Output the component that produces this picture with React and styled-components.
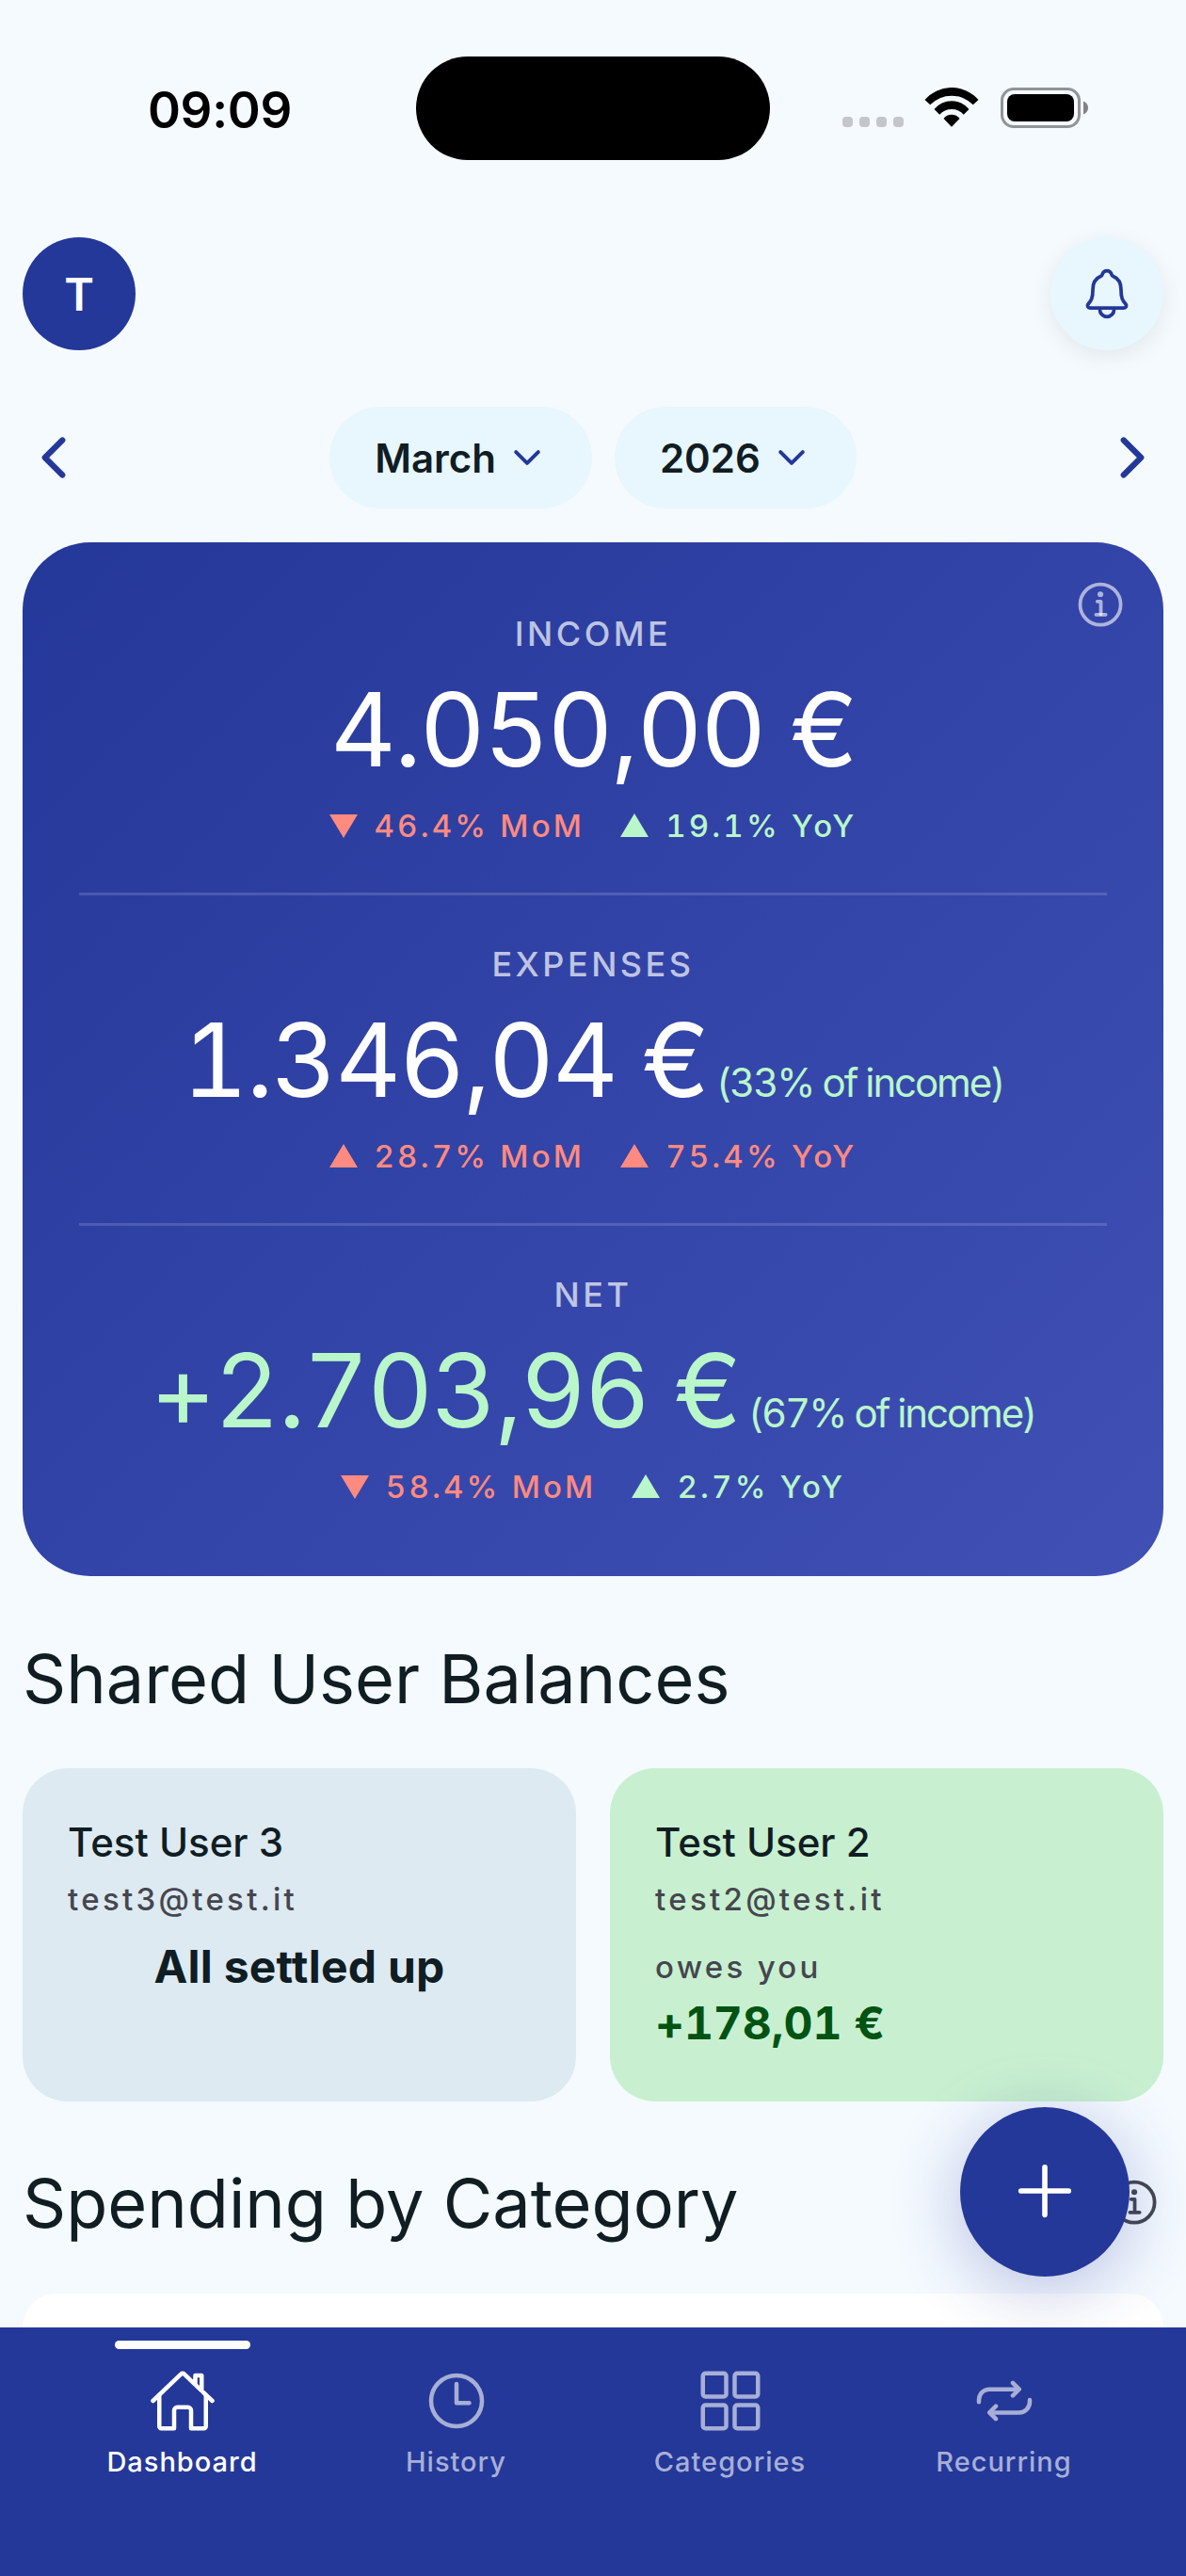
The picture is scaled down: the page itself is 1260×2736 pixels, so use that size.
import React from "react";
import styled, { createGlobalStyle, css } from "styled-components";
import {
  IoAdd,
  IoChevronBack,
  IoChevronDown,
  IoChevronForward,
  IoGridOutline,
  IoHomeOutline,
  IoInformationCircleOutline,
  IoNotificationsOutline,
  IoRepeatOutline,
  IoTimeOutline,
} from "react-icons/io5";

const stats = [
  {
    label: "INCOME",
    amount: "4.050,00 €",
    mom: { up: false, good: false, text: "46.4% MoM" },
    yoy: { up: true, good: true, text: "19.1% YoY" },
  },
  {
    label: "EXPENSES",
    amount: "1.346,04 €",
    share: "(33% of income)",
    mom: { up: true, good: false, text: "28.7% MoM" },
    yoy: { up: true, good: false, text: "75.4% YoY" },
  },
  {
    label: "NET",
    amount: "+2.703,96 €",
    positive: true,
    share: "(67% of income)",
    mom: { up: false, good: false, text: "58.4% MoM" },
    yoy: { up: true, good: true, text: "2.7% YoY" },
  },
];

const tabs = [
  { label: "Dashboard", Icon: IoHomeOutline, active: true },
  { label: "History", Icon: IoTimeOutline },
  { label: "Categories", Icon: IoGridOutline },
  { label: "Recurring", Icon: IoRepeatOutline },
];

const WifiIcon = () => (
  <svg width="58" height="44" viewBox="0 0 58 44">
    <path d="M0.5 13A37.7 37.7 0 0 1 57.5 13L51.8 18.3A31.9 31.9 0 0 0 6.2 18.3Z" />
    <path d="M10.5 23A24 24 0 0 1 47.5 23L41.8 28.7A17.2 17.2 0 0 0 16.2 28.7Z" />
    <path d="M20.5 33A10.6 10.6 0 0 1 37.5 33L29 41.7Z" />
  </svg>
);

const BatteryIcon = () => (
  <svg width="94" height="44" viewBox="0 0 94 44">
    <rect
      x="1.5"
      y="1.5"
      width="82"
      height="40"
      rx="12.5"
      fill="none"
      stroke="#909498"
      strokeWidth="3"
    />
    <rect x="7" y="7" width="71" height="29" rx="8" />
    <path d="M88 14.5C91.5 16 93 18.5 93 21.5S91.5 27 88 28.5Z" fill="#808488" />
  </svg>
);

const Trend = ({ up, good, text }) => (
  <TrendItem $good={good}>
    <svg width="30" height="26" viewBox="0 0 30 26">
      <path d={up ? "M15 0L30 25H0Z" : "M0 1H30L15 26Z"} fill="currentColor" />
    </svg>
    {text}
  </TrendItem>
);

// dashboard screen: monthly summary, shared balances and the bottom tab bar

const App = () => {
  return (
    <Screen>
      <GlobalStyle />
      <StatusBar>
        <Time>09:09</Time>
        <Island />
        <StatusIcons>
          <SignalDots>
            <i />
            <i />
            <i />
            <i />
          </SignalDots>
          <WifiIcon />
          <BatteryIcon />
        </StatusIcons>
      </StatusBar>

      <Header>
        <Avatar>T</Avatar>
        <BellButton>
          <IoNotificationsOutline />
        </BellButton>
      </Header>

      <MonthRow>
        <ArrowButton>
          <IoChevronBack />
        </ArrowButton>
        <Pills>
          <Pill>
            March <IoChevronDown />
          </Pill>
          <Pill>
            2026 <IoChevronDown />
          </Pill>
        </Pills>
        <ArrowButton>
          <IoChevronForward />
        </ArrowButton>
      </MonthRow>

      <SummaryCard>
        <CardInfo />
        {stats.map((stat) => (
          <Stat key={stat.label}>
            <StatLabel>{stat.label}</StatLabel>
            <AmountRow $positive={stat.positive}>
              {stat.amount}
              {stat.share && <Share>{stat.share}</Share>}
            </AmountRow>
            <TrendRow>
              <Trend {...stat.mom} />
              <Trend {...stat.yoy} />
            </TrendRow>
          </Stat>
        ))}
      </SummaryCard>

      <SectionTitle>Shared User Balances</SectionTitle>
      <Balances>
        <BalanceCard>
          <UserName>Test User 3</UserName>
          <Email>test3@test.it</Email>
          <Settled>All settled up</Settled>
        </BalanceCard>
        <BalanceCard $owed>
          <UserName>Test User 2</UserName>
          <Email>test2@test.it</Email>
          <Owes>owes you</Owes>
          <OwedAmount>+178,01 €</OwedAmount>
        </BalanceCard>
      </Balances>

      <TitleRow>
        <SectionTitle $flush>Spending by Category</SectionTitle>
        <IoInformationCircleOutline />
      </TitleRow>
      <CategoryCard />

      <AddButton>
        <IoAdd />
      </AddButton>

      <TabBar>
        {tabs.map(({ label, Icon, active }) => (
          <Tab key={label} $active={active}>
            <Indicator $active={active} />
            <Icon />
            <span>{label}</span>
          </Tab>
        ))}
      </TabBar>
    </Screen>
  );
};

const GlobalStyle = createGlobalStyle`
  * {
    box-sizing: border-box;
  }

  body {
    margin: 0;
    background: #f5faff;
    font-family: Inter, "Liberation Sans", sans-serif;
  }

  button {
    font-family: inherit;
    border: none;
    padding: 0;
    background: none;
  }

  svg {
    display: block;
    flex-shrink: 0;
  }
`;

const Screen = styled.div`
  position: relative;
  display: flex;
  flex-direction: column;
  width: 1260px;
  height: 2736px;
  overflow: hidden;
  background: #f5faff;
  color: #101d23;
`;

const StatusBar = styled.div`
  display: grid;
  grid-template-columns: 442px 376px 442px;
  align-items: center;
  height: 110px;
  margin-top: 60px;
`;

const Time = styled.div`
  padding: 3px 0 0 25px;
  text-align: center;
  font-size: 53px;
  font-weight: 600;
  letter-spacing: -0.3px;
  color: black;
`;

const Island = styled.div`
  height: 110px;
  border-radius: 55px;
  background: black;
`;

const StatusIcons = styled.div`
  display: flex;
  align-items: center;
  padding-left: 77px;

  > svg:nth-of-type(1) {
    margin: 0 23px 0 22px;
  }
`;

const SignalDots = styled.div`
  display: flex;
  gap: 7px;
  padding-top: 29px;

  i {
    width: 11px;
    height: 11px;
    border-radius: 4px;
    background: #c3c7cb;
  }
`;

const Header = styled.div`
  display: flex;
  justify-content: space-between;
  margin-top: 82px;
  padding: 0 24px;
`;

const round = css`
  display: flex;
  align-items: center;
  justify-content: center;
  border-radius: 50%;
`;

const Avatar = styled.div`
  ${round}
  width: 120px;
  height: 120px;
  background: #243899;
  color: white;
  font-size: 48px;
  font-weight: 600;
`;

const BellButton = styled.button`
  ${round}
  width: 120px;
  height: 120px;
  background: #e8f6fe;
  color: #243899;
  font-size: 60px;
  box-shadow: 0 6px 24px rgba(0, 0, 0, 0.08);
`;

const MonthRow = styled.div`
  display: flex;
  align-items: center;
  justify-content: space-between;
  height: 108px;
  margin-top: 60px;
  padding: 0 24px;
`;

const ArrowButton = styled.button`
  ${round}
  width: 66px;
  height: 66px;
  color: #243899;
  font-size: 66px;
`;

const Pills = styled.div`
  display: flex;
  gap: 24px;
`;

const Pill = styled.button`
  display: flex;
  align-items: center;
  gap: 12px;
  height: 108px;
  padding: 0 48px;
  border-radius: 54px;
  background: #e8f6fe;
  color: #101d23;
  font-size: 42px;
  font-weight: 600;

  svg {
    color: #243899;
    font-size: 42px;
  }
`;

const SummaryCard = styled.section`
  position: relative;
  height: 1098px;
  margin: 36px 24px 0;
  padding: 21px 60px 0;
  border-radius: 72px;
  background: linear-gradient(135deg, #243899, #4050b5);
`;

const CardInfo = styled(IoInformationCircleOutline)`
  position: absolute;
  top: 37px;
  right: 36px;
  font-size: 60px;
  color: rgba(255, 255, 255, 0.6);
`;

const Stat = styled.div`
  display: flex;
  flex-direction: column;
  align-items: center;
  height: 351px;
  padding-top: 49px;
  border-top: 3px solid transparent;

  & + & {
    border-top-color: rgba(255, 255, 255, 0.15);
  }
`;

const StatLabel = styled.div`
  font-size: 36px;
  line-height: 48px;
  letter-spacing: 3.5px;
  font-weight: 500;
  color: rgba(255, 255, 255, 0.7);
`;

const AmountRow = styled.div`
  height: 132px;
  margin-top: 12px;
  font-size: 108px;
  line-height: 132px;
  letter-spacing: -2.1px;
  font-variant-numeric: tabular-nums;
  white-space: pre;
  color: ${({ $positive }) => ($positive ? "#b9f6ca" : "white")};
`;

const Share = styled.span`
  margin-left: 9px;
  font-size: 42px;
  line-height: 1;
  color: #b9f6ca;
`;

const TrendRow = styled.div`
  display: flex;
  gap: 38px;
  margin-top: 12px;
`;

const TrendItem = styled.div`
  display: flex;
  align-items: center;
  gap: 18px;
  font-size: 33px;
  line-height: 48px;
  font-weight: 500;
  letter-spacing: 3.2px;
  font-variant-numeric: tabular-nums;
  color: ${({ $good }) => ($good ? "#b9f6ca" : "#ff8a80")};
`;

const SectionTitle = styled.h2`
  margin: ${({ $flush }) => ($flush ? "0" : "61px 24px 0")};
  font-size: 72px;
  line-height: 96px;
  font-weight: 400;
`;

const Balances = styled.div`
  display: grid;
  grid-template-columns: 1fr 1fr;
  gap: 36px;
  margin-top: 47px;
  padding: 0 24px;
`;

const BalanceCard = styled.div`
  display: flex;
  flex-direction: column;
  height: 354px;
  padding: 49px 48px 0;
  border-radius: 48px;
  background: ${({ $owed }) => ($owed ? "#c8f0d0" : "#ddeaf2")};
`;

const UserName = styled.div`
  font-size: 42px;
  line-height: 60px;
  font-weight: 500;
`;

const Email = styled.div`
  margin-top: 6px;
  font-size: 33px;
  line-height: 48px;
  font-weight: 500;
  letter-spacing: 3.3px;
  color: #46464f;
`;

const Owes = styled(Email)`
  margin-top: 24px;
`;

const Settled = styled.div`
  margin-top: 18px;
  line-height: 60px;
  text-align: center;
  font-size: 48px;
  font-weight: 700;
  letter-spacing: 0.25px;
`;

const OwedAmount = styled.div`
  margin-top: 6px;
  font-size: 48px;
  line-height: 60px;
  font-weight: 700;
  font-variant-numeric: tabular-nums;
  letter-spacing: -0.1px;
  color: #005313;
`;

const TitleRow = styled.div`
  display: flex;
  align-items: center;
  justify-content: space-between;
  margin-top: 60px;
  padding: 0 24px;

  svg {
    font-size: 60px;
    color: #46464f;
  }
`;

const CategoryCard = styled.div`
  flex: 1;
  margin: 48px 24px 0;
  border-radius: 48px 48px 0 0;
  background: white;
`;

const AddButton = styled.button`
  ${round}
  position: absolute;
  top: 2238px;
  right: 60px;
  width: 180px;
  height: 180px;
  padding-bottom: 2px;
  background: #243899;
  color: white;
  font-size: 90px;
  box-shadow: 0 12px 72px rgba(36, 56, 153, 0.3);
`;

const TabBar = styled.nav`
  position: relative;
  display: grid;
  grid-template-columns: repeat(4, 1fr);
  height: 264px;
  padding: 0 48px;
  background: #243899;
`;

const Tab = styled.div`
  display: flex;
  flex-direction: column;
  align-items: center;
  color: ${({ $active }) => ($active ? "white" : "#a7afd6")};

  svg {
    margin-top: 19px;
    font-size: 72px;
  }

  span {
    margin-top: 8px;
    font-size: 29px;
    line-height: 42px;
    font-weight: 500;
    letter-spacing: 1px;
  }
`;

const Indicator = styled.div`
  width: 144px;
  height: 9px;
  margin-top: 14px;
  border-radius: 5px;
  background: ${({ $active }) => ($active ? "white" : "transparent")};
`;

export default App;
